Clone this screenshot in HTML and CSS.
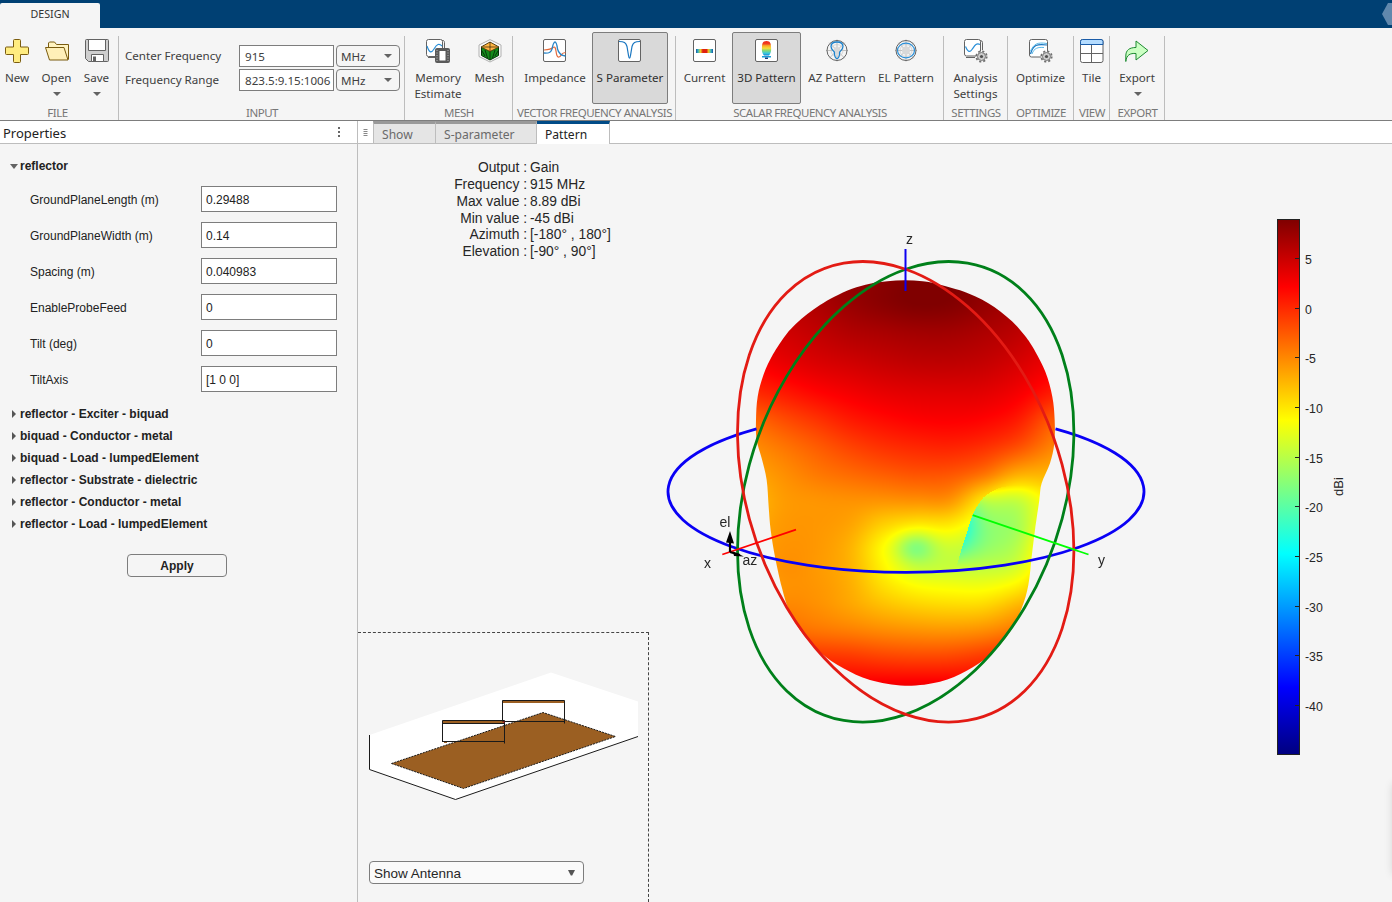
FILE: index.html
```
<!DOCTYPE html>
<html lang="en">
<head>
<meta charset="utf-8">
<title>Antenna Designer</title>
<link rel="stylesheet" href="styles.css">
</head>
<body>
<div class="app">
  <header class="titlebar">
    <div class="main-tab">DESIGN</div>
    <svg class="corner" width="10" height="28" viewBox="0 0 10 28"><path d="M0 14 6 3h4v22H6z" fill="#6088ad"/></svg>
  </header>

  <div class="toolstrip">
    <section class="group g-file">
      <div class="tools">
        <button class="tool w34"><svg class="ico" viewBox="0 0 24 24"><path d="M8.500 1.500q0-1 1-1h5q1 0 1 1V8h7q1 0 1 1v5.500q0 1-1 1h-7v7q0 1-1 1h-5q-1 0-1-1v-7h-7q-1 0-1-1V9q0-1 1-1h7z" fill="#ffec80" stroke="#7a5c10"/></svg><span>New</span></button>
        <button class="tool w45"><svg class="ico" viewBox="0 0 24 24"><path d="M3.500 8V4l1-1h5l2 2.500h12V20l-1 1" fill="#fff3c0" stroke="#7a5c10"/><path d="M.5 8.500h18.500l4 12.500H4.500z" fill="#fff0b8" stroke="#7a5c10" stroke-linejoin="round"/></svg><span>Open</span><i class="caret"></i></button>
        <button class="tool w35"><svg class="ico" viewBox="0 0 24 24"><path d="M.5 1.500q0-1 1-1h21q1 0 1 1v20q0 1-1 1h-19l-3-3z" fill="#cfcfcf" stroke="#636363"/><path d="M3.500.5h17v11h-17z" fill="#fff" stroke="#636363"/><path d="M6.500 22.500v-7h12v7z" fill="#fff" stroke="#636363"/><path d="M8 17.500h3v5H8z" fill="#636363"/></svg><span>Save</span><i class="caret"></i></button>
      </div>
      <h2>FILE</h2>
    </section>
    <section class="group g-input">
      <div class="fields">
        <label>Center Frequency</label><div class="field">915</div><div class="unit">MHz<i class="caret"></i></div>
        <label>Frequency Range</label><div class="field">823.5:9.15:1006</div><div class="unit">MHz<i class="caret"></i></div>
      </div>
      <h2>INPUT</h2>
    </section>
    <section class="group g-mesh">
      <div class="tools">
        <button class="tool w56"><svg class="ico" viewBox="0 0 24 24"><path d="M16 1.500h1.500q1 1 1 2V9M2 18.500h7" fill="none" stroke="#636363"/><rect x=".5" y=".5" width="16" height="17" rx="2" fill="#fff" stroke="#636363"/><path d="M1 7c2 6 4 8 7 3s5-6 8-3" fill="none" stroke="#2a8fd8" stroke-width="1.200"/><path d="M9 11q0-2 2-2h11q2 0 2 2v11q0 2-2 2H11q-2 0-2-2z" fill="#5a5a5a"/><path d="M11 11v11.500M22 11v11.500" stroke="#a8a8a8" stroke-dasharray="1 1.500" stroke-width="1.200"/><rect x="13.500" y="12" width="6" height="9.500" fill="#fff"/></svg><span>Memory<br>Estimate</span></button>
        <button class="tool w45"><svg class="ico" viewBox="0 0 24 24"><path d="M12 .6 23 6v11.500L12 23 1 17.500V6z" fill="#fafafa" stroke="#b0b0b0"/><path d="M12 3.500 20.500 8v8.500L12 21 3.500 16.500V8z" fill="#138a1a" stroke="#06330a"/><path d="M12 3 21 8 12 12.500 3 8z" fill="#ffb545" stroke="#302000" stroke-width=".7"/><path d="M12 3v9.500M5 8h14" stroke="#302000" stroke-width=".7"/><path d="M12 13v8M4 12l3 5M7 11l2.500 8M20 12l-3 5M17 11l-2.500 8" stroke="#06330a" fill="none" stroke-width=".9"/></svg><span>Mesh</span></button>
      </div>
      <h2>MESH</h2>
    </section>
    <section class="group g-vector">
      <div class="tools">
        <button class="tool w74"><svg class="ico" viewBox="0 0 24 24"><rect x=".5" y=".5" width="22" height="22" rx="1.500" fill="#fff" stroke="#636363"/><path d="M1 11c5-.5 7.500-1 9-2.500 2-1.500 2.500.5 3 3.500.5 4 1.300 6.500 3 6 2.500-.5 2-4.500 6.500-4.500" fill="none" stroke="#e4693a" stroke-width="1.200"/><path d="M1 14c5 .5 7-.5 8-4 1-5 1.500-7 3-7s2 3 2.500 7c1 4 3 6.500 8 7" fill="none" stroke="#2a86c8" stroke-width="1.300"/></svg><span>Impedance</span></button>
        <button class="tool w76 on"><svg class="ico" viewBox="0 0 24 24"><rect x=".5" y=".5" width="22" height="22" rx="1.500" fill="#fff" stroke="#636363"/><path d="M1 2.500c5 0 7 1 8 5l1.500 9c.5 3.500 1.500 3.500 2 0l1.500-9c1-4 3-5 8-5" fill="none" stroke="#1976c0" stroke-width="1.200"/></svg><span>S Parameter</span></button>
      </div>
      <h2>VECTOR FREQUENCY ANALYSIS</h2>
    </section>
    <section class="group g-scalar">
      <div class="tools">
        <button class="tool w55"><svg class="ico" viewBox="0 0 24 24"><defs><linearGradient id="cur"><stop offset="0" stop-color="#1a50a0"/><stop offset=".12" stop-color="#35b8c8"/><stop offset=".27" stop-color="#f0d020"/><stop offset=".4" stop-color="#e02010"/><stop offset=".62" stop-color="#e02010"/><stop offset=".75" stop-color="#f0d020"/><stop offset=".88" stop-color="#35b8c8"/><stop offset="1" stop-color="#1a50a0"/></linearGradient></defs><rect x=".5" y=".5" width="22" height="22" rx="1.500" fill="#fff" stroke="#636363"/><path d="M3 10h17v4H3z" fill="url(#cur)"/></svg><span>Current</span></button>
        <button class="tool w69 on"><svg class="ico" viewBox="0 0 24 24"><defs><linearGradient id="lobe" x2="0" y2="1"><stop offset="0" stop-color="#f02818"/><stop offset=".2" stop-color="#f04020"/><stop offset=".32" stop-color="#f8a828"/><stop offset=".5" stop-color="#f8dc38"/><stop offset=".65" stop-color="#8cd870"/><stop offset=".85" stop-color="#38c8e0"/><stop offset="1" stop-color="#1080d0"/></linearGradient></defs><rect x=".5" y=".5" width="22" height="22" rx="1.500" fill="#fff" stroke="#636363"/><path d="M11.500 2c4 0 4.500 3 4.500 6 .3 3 .2 6-2 8.500H9C6.800 14 6.700 11 7 8c0-3 .5-6 4.500-6z" fill="url(#lobe)"/><path d="M7 17h9v1.500H7z" fill="#189cd8"/><path d="M10 18.500h3v1.500h-3z" fill="#1a3c80"/></svg><span>3D Pattern</span></button>
        <button class="tool w72"><svg class="ico" viewBox="0 0 24 24"><path d="M12 .5v22M1 11.500h22M4.200 3.700l15.600 15.600M19.800 3.700 4.200 19.300" stroke="#aaa" stroke-width=".7"/><circle cx="12" cy="11.500" r="10" fill="none" stroke="#636363"/><circle cx="12" cy="11.500" r="6" fill="none" stroke="#c8c8c8" stroke-width=".7"/><circle cx="12" cy="11.500" r="3.500" fill="#d8d8d8"/><path d="M12 3c4 0 6 2 6 4.500s-2 4-3.300 5.500c-.5 4-.2 6.500-2.700 6.500S9.800 17 9.300 13C8 11.500 6 10 6 7.500S8 3 12 3z" fill="none" stroke="#1c82cc" stroke-width="1.300"/></svg><span>AZ Pattern</span></button>
        <button class="tool w66"><svg class="ico" viewBox="0 0 24 24"><path d="M12 .5v22M1 11.500h22M4.200 3.700l15.600 15.600M19.800 3.700 4.200 19.300" stroke="#aaa" stroke-width=".7"/><circle cx="12" cy="11.500" r="10" fill="none" stroke="#636363"/><circle cx="12" cy="11.500" r="6" fill="none" stroke="#c8c8c8" stroke-width=".7"/><circle cx="12" cy="11.500" r="4" fill="#d8d8d8"/><ellipse cx="12" cy="11.500" rx="8.500" ry="7.300" fill="none" stroke="#2a8fd8" stroke-width="1.200"/></svg><span>EL Pattern</span></button>
      </div>
      <h2>SCALAR FREQUENCY ANALYSIS</h2>
    </section>
    <section class="group g-settings">
      <div class="tools">
        <button class="tool w63"><svg class="ico" viewBox="0 0 24 24"><path d="M16 1.500q2.500 0 2.500 2V11M2 18.500h9" fill="none" stroke="#636363"/><rect x=".5" y=".5" width="16" height="16.500" rx="2" fill="#fff" stroke="#636363"/><path d="M1.500 7.500c2 5 4 6.500 6.500 3s4-7 8-5" fill="none" stroke="#2a8fd8" stroke-width="1.200"/><circle cx="17.500" cy="17.500" r="5.200" fill="#f5f5f5" stroke="#707070" stroke-width="1.800" stroke-dasharray="2.100 2"/><circle cx="17.500" cy="17.500" r="4" fill="#ccc" stroke="#777"/><circle cx="17.500" cy="17.500" r="1.600" fill="#505050"/></svg><span>Analysis<br>Settings</span></button>
      </div>
      <h2>SETTINGS</h2>
    </section>
    <section class="group g-optimize">
      <div class="tools">
        <button class="tool w65"><svg class="ico" viewBox="0 0 24 24"><rect x=".5" y=".5" width="18" height="17.500" rx="2" fill="#fff" stroke="#636363"/><path d="M1.500 15C4 6 8 4.500 18 6" fill="none" stroke="#1976c0" stroke-width="1.200"/><path d="M1.500 12C5 5 8 3 18 4.500M3 15c2-6 6-7 12-6.500" fill="none" stroke="#58b8e8"/><circle cx="17.500" cy="17.500" r="5.200" fill="#f5f5f5" stroke="#707070" stroke-width="1.800" stroke-dasharray="2.100 2"/><circle cx="17.500" cy="17.500" r="4" fill="#ccc" stroke="#777"/><circle cx="17.500" cy="17.500" r="1.600" fill="#505050"/></svg><span>Optimize</span></button>
      </div>
      <h2>OPTIMIZE</h2>
    </section>
    <section class="group g-view">
      <div class="tools">
        <button class="tool w35"><svg class="ico" viewBox="0 0 24 24"><rect x=".5" y=".5" width="22.500" height="23" rx="2" fill="#fff" stroke="#636363"/><path d="M.5 5.500v-3q0-2 2-2H21q2 0 2 2v3z" fill="#b4dcff" stroke="#1a5ca8"/><path d="M11.500 6v17.500M1 14.500h22" stroke="#636363"/></svg><span>Tile</span></button>
      </div>
      <h2>VIEW</h2>
    </section>
    <section class="group g-export">
      <div class="tools">
        <button class="tool w54"><svg class="ico" viewBox="0 0 24 24"><path d="M.8 22.500V17C.8 11 4.500 8.500 11 8.500V2L23 11.500 11 21v-6.500C5 14 1.500 16 .8 22.500z" fill="#ccffc4" stroke="#1c8a30"/></svg><span>Export</span><i class="caret"></i></button>
      </div>
      <h2>EXPORT</h2>
    </section>
  </div>

  <div class="workspace">
    <aside class="properties">
      <div class="panel-head"><span>Properties</span><svg width="4" height="12" viewBox="0 0 4 12"><path d="M1 1h2v2H1zM1 5h2v2H1zM1 9h2v2H1z" fill="#666"/></svg></div>
      <div class="panel-body">
        <h3 class="open">reflector</h3>
        <div class="rows">
          <label>GroundPlaneLength (m)</label><div class="box">0.29488</div>
          <label>GroundPlaneWidth (m)</label><div class="box">0.14</div>
          <label>Spacing (m)</label><div class="box">0.040983</div>
          <label>EnableProbeFeed</label><div class="box">0</div>
          <label>Tilt (deg)</label><div class="box">0</div>
          <label>TiltAxis</label><div class="box">[1 0 0]</div>
        </div>
        <ul class="sections">
          <li>reflector - Exciter - biquad</li>
          <li>biquad - Conductor - metal</li>
          <li>biquad - Load - lumpedElement</li>
          <li>reflector - Substrate - dielectric</li>
          <li>reflector - Conductor - metal</li>
          <li>reflector - Load - lumpedElement</li>
        </ul>
        <button class="apply">Apply</button>
      </div>
    </aside>

    <main class="docs">
      <nav class="doc-tabs">
        <svg class="grip" width="15" height="22" viewBox="0 0 15 22"><path d="M5.500 8.500h4M5.500 10.500h4M5.500 12.500h4M5.500 14.500h4" stroke="#888"/></svg>
        <div class="doc-tab t-show">Show</div>
        <div class="doc-tab t-sparam">S-parameter</div>
        <div class="doc-tab t-pattern active">Pattern</div>
      </nav>
      <div class="figure">
        <dl class="info">
          <dt>Output :</dt><dd>Gain</dd>
          <dt>Frequency :</dt><dd>915 MHz</dd>
          <dt>Max value :</dt><dd>8.89 dBi</dd>
          <dt>Min value :</dt><dd>-45 dBi</dd>
          <dt>Azimuth :</dt><dd>[-180° , 180°]</dd>
          <dt>Elevation :</dt><dd>[-90° , 90°]</dd>
        </dl>

        <canvas class="surface" id="surface" width="304" height="410"></canvas>
        <svg class="axes" width="500" height="520" viewBox="650 220 500 520">
          <g fill="none" stroke-width="2.800">
            <path d="M756.500 428.900A238 80.700 0 1 0 1055.500 428.900" stroke="#0a00f5"/>
            <circle r="1" transform="matrix(168.200 -59 0 222.600 905.700 491.800)" stroke="#00801a" vector-effect="non-scaling-stroke"/>
            <circle r="1" transform="matrix(168.200 59 0 222.600 905.700 491.800)" stroke="#e31b14" vector-effect="non-scaling-stroke"/>
          </g>
          <path d="M905.500 249v42" stroke="#0c00f0" stroke-width="2"/>
          <path d="M722.300 554.500 796 529.700" stroke="#ff0000" stroke-width="1.800"/>
          <path d="M972.700 515.200 1088.500 554.500" stroke="#00ff00" stroke-width="1.800"/>
          <path d="M730 552v-10M730 552l10 3" stroke="#000" stroke-width="2.200" fill="none"/>
          <path d="M730 531l4 12.500-8-1zM733 551.500l11 5-10-.5z" fill="#000"/>
          <g class="axis-names">
            <text x="906" y="244">z</text><text x="704" y="568">x</text><text x="1098" y="565">y</text>
            <text x="719.500" y="527">el</text><text x="742.500" y="565">az</text>
          </g>
        </svg>

        <div class="colorbar">
          <div class="ramp"></div>
          <div class="ticks"><span>5</span><span>0</span><span>-5</span><span>-10</span><span>-15</span><span>-20</span><span>-25</span><span>-30</span><span>-35</span><span>-40</span></div>
          <div class="bar-name">dBi</div>
        </div>

        <div class="inset">
          <svg class="antenna" width="272" height="132" viewBox="368 670 272 132">
            <path d="M369.500 735 551 672.500 638 701.500v35L455.500 799.500l-86-30z" fill="#fff"/>
            <path d="M369.500 735v34.500l86 30L638 736.500" fill="none" stroke="#1a1a1a"/>
            <path d="M391.500 763.500 543 712.500 615.500 736.500 463.500 788.500z" fill="#9b5f22" stroke="#1a1a1a" stroke-dasharray="2 1"/>
            <path d="M502.500 700.500h62v2.500h-62zM442.500 720.500h62v3h-62z" fill="#9b5f22"/>
            <path d="M502.500 720.500v-20h62V723.500M502.500 721.500h62M442.500 742v-21.500h62V743.500M442.500 723.500h62M442.500 741.500h62" fill="none" stroke="#1a1a1a"/>
            <path d="M444 742.500h3" stroke="#9b5f22"/>
            <path d="M503 722h1.500" stroke="#d01020"/>
          </svg>
          <div class="select"><span>Show Antenna</span><svg width="7" height="6" viewBox="0 0 7 6"><path d="M0 0h7L4.200 5.500H2.800z" fill="#555"/></svg></div>
        </div>
        <div class="edge-shadow"></div>
      </div>
    </main>
  </div>
</div>
<script src="surface.js"></script>
</body>
</html>
```
FILE: styles.css
```
* { box-sizing: border-box; }
body { margin: 0; background: #f5f5f5; color: #222; }
h2, h3, ul, dl, dd { margin: 0; padding: 0; }
button { margin: 0; padding: 0; background: none; border: 0; font: inherit; letter-spacing: inherit; color: inherit; }

.app { width: 1392px; height: 902px; overflow: hidden; display: flex; flex-direction: column; font-family: "Noto Sans", sans-serif; }

.titlebar { height: 28px; background: #004073; display: flex; justify-content: space-between; align-items: flex-end; flex: none; }
.main-tab { width: 100px; height: 25px; background: #f5f5f5; border-radius: 2px 2px 0 0; text-align: center; font-size: 10.700px; line-height: 22px; color: #333; }

.toolstrip { height: 93px; flex: none; display: flex; background: #f5f5f5; border-bottom: 1px solid #7d7d7d; font-size: 11.600px; color: #404040; }
.group { position: relative; display: flex; flex-direction: column; justify-content: space-between; padding-top: 4px; }
.group::after { content: ""; position: absolute; right: 0; top: 8px; bottom: 0; width: 1px; background: #bdbdbd; }
.group h2 { font-size: 11.500px; font-weight: 400; line-height: 14px; color: #777; text-align: center; letter-spacing: -0.47px; white-space: nowrap; }
.g-file h2 { padding-right: 4px; }
.tools { display: flex; height: 72px; }
.tool { display: flex; flex-direction: column; align-items: center; height: 72px; padding-top: 7px; white-space: nowrap; line-height: 16px; border: 0 solid #7d7d7d; border-radius: 2px; flex: none; }
.tool.on { background: #d9d9d9; border-width: 1px; padding-top: 6px; color: #303030; }
.tool > span { margin-top: 7px; }
.ico { width: 24px; height: 24px; fill: none; flex: none; }
.caret { width: 0; height: 0; border: 4px solid transparent; border-top-color: #636363; border-bottom-width: 0; }
.tool .caret { margin-top: 6px; margin-left: 1px; }
.g-file { width: 119px; } .g-input { width: 286px; }
.g-mesh { width: 108px; } .g-mesh .tools { padding-left: 5px; gap: 1px; }
.g-vector { width: 163px; } .g-vector .tools { padding-left: 5px; }
.g-scalar { width: 268px; } .g-scalar .tools { padding-left: 1px; }
.g-settings { width: 64px; } .g-optimize { width: 66px; } .g-view { width: 36px; } .g-export { width: 55px; }
.w34 { width: 34px; } .w35 { width: 35px; } .w45 { width: 45px; } .w54 { width: 54px; } .w55 { width: 55px; } .w56 { width: 56px; }
.w63 { width: 63px; } .w65 { width: 65px; } .w66 { width: 66px; } .w69 { width: 69px; } .w72 { width: 72px; } .w74 { width: 74px; } .w76 { width: 76px; }

.fields { display: grid; grid-template-columns: 112px 95px 64px; grid-auto-rows: 22px; column-gap: 2px; row-gap: 2px; padding: 13px 0 0 6px; align-items: center; }
.fields label { line-height: 22px; height: 22px; }
.field { height: 22px; border: 1px solid #7d7d7d; background: #fff; padding: 0 0 0 5px; line-height: 21px; white-space: nowrap; }
.unit { height: 22px; border: 1px solid #7d7d7d; border-radius: 4px; display: flex; align-items: center; justify-content: space-between; padding: 0 7px 0 4px; }

.workspace { flex: 1; display: flex; min-height: 0; }
.properties { width: 358px; border-right: 1px solid #bdbdbd; flex: none; }
.panel-head { height: 23px; background: #fff; border-bottom: 1px solid #bdbdbd; display: flex; justify-content: space-between; align-items: center; padding: 0 16px 0 3px; font-size: 13px; }
.panel-head span { padding-top: 2px; }
.panel-body { font: 12px "Liberation Sans", sans-serif; display: flex; flex-direction: column; }
.panel-body h3, .sections { font-size: 12px; font-weight: 700; }
.panel-body h3 { margin-top: 11px; height: 22px; line-height: 22px; padding-left: 10px; display: flex; align-items: center; gap: 2px; }
.panel-body h3::before { content: ""; border: 4px solid transparent; border-top: 5px solid #636363; border-bottom: 0; }
.rows { display: grid; grid-template-columns: 171px 136px; grid-auto-rows: 26px; row-gap: 10px; padding: 9px 0 0 30px; align-items: center; }
.rows label { padding-top: 2px; }
.box { height: 26px; border: 1px solid #7d7d7d; background: #fff; line-height: 26px; padding-left: 4px; }
.sections { list-style: none; margin-top: 11px; padding-left: 12px; }
.sections li { height: 22px; display: flex; align-items: center; gap: 4px; }
.sections li::before { content: ""; border: 4px solid transparent; border-left: 4px solid #555; border-right: 0; }
.apply { width: 100px; height: 23px; margin: 19px 0 0 127px; border: 1px solid #7d7d7d; border-radius: 4px; font-weight: 700; }

.docs { flex: 1; display: flex; flex-direction: column; min-width: 0; }
.doc-tabs { height: 23px; flex: none; display: flex; background: #fff; border-bottom: 1px solid #bdbdbd; font-size: 12.100px; color: #6a6a6a; }
.doc-tab { height: 22px; background: #e5e5e5; border-top: 3px solid #999; border-right: 1px solid #bdbdbd; padding-left: 8px; line-height: 22px; }
.t-show { width: 63px; border-left: 1px solid #bdbdbd; } .t-sparam { width: 101px; } .t-pattern { width: 73px; }
.doc-tab.active { height: 23px; background: #fff; border-top-color: #004b87; color: #222; }

.figure { position: relative; flex: 1; font-family: "Liberation Sans", sans-serif; color: #262626; }
.info { display: grid; grid-template-columns: 169px auto; column-gap: 3px; grid-auto-rows: 16.850px; line-height: 17px; padding-top: 15px; font-size: 13.800px; }
.info dt { text-align: right; }
.surface { position: absolute; left: 396px; top: 133px; }
.axes { position: absolute; left: 292px; top: 76px; overflow: visible; }
.axis-names { font-size: 14px; fill: #262626; }
.colorbar { position: absolute; left: 919px; top: 75px; display: flex; }
.ramp { width: 23px; height: 536px; border: 1px solid #222; background: linear-gradient(#800000 0, #ff0000 12.500%, #ffff00 37.500%, #00ffff 62.500%, #0000ff 87.500%, #000080 100%); }
.ticks { width: 31px; padding-top: 16px; font-size: 12.300px; }
.ticks span { position: relative; display: block; height: 49.680px; line-height: 50.700px; padding-left: 5px; }
.ticks span::before { content: ""; position: absolute; left: -5px; top: 23px; width: 5px; height: 1px; background: #222; }
.bar-name { writing-mode: vertical-rl; transform: rotate(180deg); font-size: 13px; line-height: 15px; height: 536px; text-align: center; }

.inset { position: absolute; left: 0; bottom: 0; width: 291px; height: 270px; border-top: 1px dashed #444; border-right: 1px dashed #444; display: flex; flex-direction: column; justify-content: space-between; padding: 37px 0 18px 10px; }
.select { width: 215px; height: 23px; margin-left: 1px; border: 1px solid #7d7d7d; border-radius: 4px; background: #fafafa; display: flex; align-items: center; justify-content: space-between; padding: 0 8px 0 4px; font-size: 13.500px; }
.select span { padding-top: 2px; }
.edge-shadow { position: absolute; left: 1035px; top: 640px; width: 20px; height: 90px; box-shadow: 0 0 10px rgba(0, 0, 0, 0.15); }
```
FILE: surface.js
```
// Gain surface: normalised gain sampled on a coarse grid, smoothed, then mapped to the jet colours.
const S = 3, OX = 312, OY = 171;            // model units per pixel, model origin of the canvas
const cols = [300, 400, 500, 600, 700, 800, 900, 1000, 1100, 1200];
const rows = [
  [170, .93, .95, .97, .98, .99, 1, 1, .985, .96, .94],
  [250, .93, .94, .955, .975, .99, 1, .997, .98, .96, .94],
  [340, .91, .92, .935, .95, .958, .965, .965, .955, .94, .91],
  [430, .875, .895, .91, .92, .93, .937, .938, .932, .915, .89],
  [520, .83, .85, .87, .885, .897, .903, .905, .902, .885, .85],
  [600, .77, .80, .825, .85, .865, .875, .878, .872, .85, .79],
  [680, .735, .76, .785, .81, .828, .838, .842, .83, .80, .75],
  [760, .71, .735, .757, .772, .785, .795, .793, .765, .71, .70],
  [840, .69, .722, .73, .733, .732, .735, .73, .65, .59, .65],
  [910, .70, .725, .727, .715, .675, .655, .65, .60, .56, .66],
  [980, .71, .73, .726, .70, .63, .575, .58, .56, .565, .68],
  [1040, .70, .733, .725, .70, .635, .58, .57, .565, .585, .69],
  [1100, .70, .73, .728, .705, .658, .627, .617, .615, .64, .70],
  [1160, .71, .742, .735, .715, .69, .673, .665, .668, .70, .74],
  [1230, .76, .77, .76, .75, .738, .73, .727, .735, .76, .79],
  [1310, .82, .83, .825, .82, .81, .805, .807, .82, .84, .86],
  [1400, .88, .885, .89, .89, .892, .893, .893, .892, .89, .89]
];
const edge = [[795, 1080], [800, 1065], [805, 1045], [815, 1025], [830, 1003], [850, 987], [880, 970], [930, 953], [970, 940], [1010, 928], [1040, 920]];
const outline = [[765,181],[712,184],[660,191],[606,206],[553,230],[510,255],[472,282],[438,311],[408,344],[369,403],[341,463],[323,530],[318,600],[320,660],[335,715],[350,780],[356,860],[362,930],[375,1010],[395,1100],[415,1165],[450,1230],[510,1297],[580,1345],[660,1380],[765,1397],[870,1385],[950,1352],[1020,1305],[1080,1235],[1115,1165],[1135,1095],[1145,1010],[1155,930],[1168,840],[1175,790],[1200,730],[1213,670],[1214,600],[1207,530],[1186,455],[1148,381],[1118,339],[1086,304],[1052,275],[1015,250],[975,229],[930,211],[870,194],[818,184]];

// Cubic Hermite interpolation over unevenly spaced knots
function spline(xs, ys, x) {
  const n = xs.length;
  let i = 0;
  while (i < n - 2 && x > xs[i + 1]) i++;
  const h = xs[i + 1] - xs[i], t = Math.min(1, Math.max(0, (x - xs[i]) / h));
  const slope = k => {
    const a = Math.max(0, k - 1), b = Math.min(n - 1, k + 1);
    return (ys[b] - ys[a]) / (xs[b] - xs[a]);
  };
  const t2 = t * t, t3 = t2 * t;
  return (2 * t3 - 3 * t2 + 1) * ys[i] + (t3 - 2 * t2 + t) * h * slope(i)
       + (3 * t2 - 2 * t3) * ys[i + 1] + (t3 - t2) * h * slope(i + 1);
}
const bump = (x, y, cx, cy, sx, sy) => Math.exp(-(((x - cx) / sx) ** 2) - (((y - cy) / sy) ** 2));
const ys = rows.map(r => r[0]), ex = edge.map(e => e[1]), ey = edge.map(e => e[0]);
const jet = v => [3, 2, 1].map(k => 255 * Math.min(1, Math.max(0, 1.5 - Math.abs(4 * v - k))));

const canvas = document.getElementById("surface"), ctx = canvas.getContext("2d");
const img = ctx.createImageData(canvas.width, canvas.height);
for (let py = 0; py < canvas.height; py++) {
  const y = OY + py * S + 1.5;
  const line = cols.map((c, i) => spline(ys, rows.map(r => r[i + 1]), y));
  for (let px = 0; px < canvas.width; px++) {
    const x = OX + px * S + 1.5;
    let v = spline(cols, line, x) - .07 * bump(x, y, 795, 982, 55, 45);
    if (y > 796 && y < 1040) {
      const d = x - spline(ey, ex, y);
      const w = Math.sin(Math.PI * Math.min(1, Math.max(0, (y - 796) / 244)));
      if (d > 0) v -= .19 * Math.pow(w, 1.1) * Math.exp(-d / 65);
    }
    const c = jet(Math.min(1, v)), o = 4 * (py * canvas.width + px);
    img.data[o] = c[0]; img.data[o + 1] = c[1]; img.data[o + 2] = c[2]; img.data[o + 3] = 255;
  }
}
ctx.putImageData(img, 0, 0);

ctx.globalCompositeOperation = "destination-in";
ctx.beginPath();
const pt = i => { const p = outline[(i + outline.length) % outline.length]; return [(p[0] - OX) / S, (p[1] - OY) / S]; };
ctx.moveTo(...pt(0));
for (let i = 0; i < outline.length; i++) {
  const a = pt(i - 1), b = pt(i), c = pt(i + 1), d = pt(i + 2);
  ctx.bezierCurveTo(b[0] + (c[0] - a[0]) / 6, b[1] + (c[1] - a[1]) / 6, c[0] - (d[0] - b[0]) / 6, c[1] - (d[1] - b[1]) / 6, c[0], c[1]);
}
ctx.fill();
```
